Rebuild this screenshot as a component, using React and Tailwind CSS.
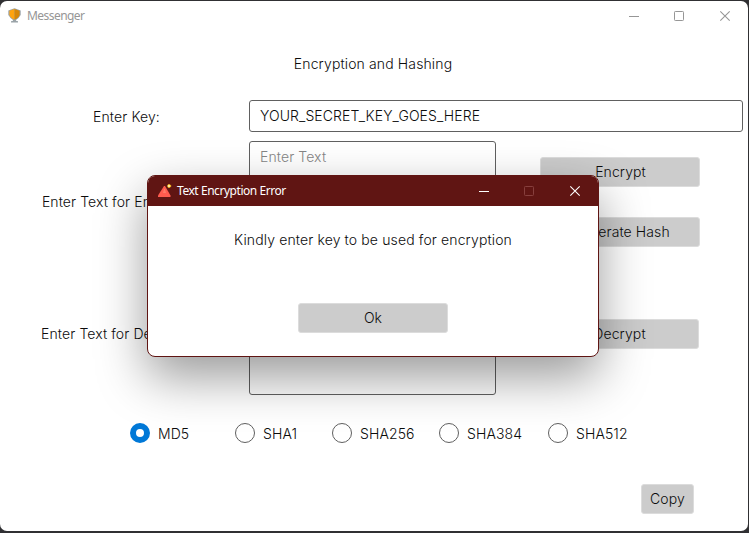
import React from "react";

const algorithms = [
  { name: "MD5", width: "w-[105px]", checked: true },
  { name: "SHA1", width: "w-[97px]" },
  { name: "SHA256", width: "w-[107px]" },
  { name: "SHA384", width: "w-[109px]" },
  { name: "SHA512", width: "w-[90px]" },
];

function Button({ children, className = "" }) {
  return (
    <button className={`flex h-[30px] shrink-0 items-center justify-center rounded-[3px] border border-[#dcdcdc] bg-[#cccccc] pb-[2px] tracking-[0.1px] ${className}`}>
      {children}
    </button>
  );
}

function WindowControls({ minColor, maxColor, closeColor }) {
  return (
    <svg className="h-[12px] w-[104px]" viewBox="0 0 104 12" fill="none">
      <path d="M0 6.5H10" stroke={minColor} />
      <rect x="45.5" y="1.5" width="9" height="9" rx="0.8" stroke={maxColor} />
      <path d="M91.3 1.3L100.7 10.7M100.7 1.3L91.3 10.7" stroke={closeColor} strokeWidth="1.1" />
    </svg>
  );
}

function TrophyIcon() {
  return (
    <svg className="h-[15px] w-[13px]" viewBox="0 0 13 15">
      <path d="M0.3 2.5L3 1.5L6.5 0.3L10 1.5L12.7 2.5V7L10.5 10L8 12V12.7L10 13.3V14.5H3V13.3L5 12.7V12L2.5 10L0.3 7Z" fill="#9aa3a8" />
      <path d="M6.5 1L1.4 2.8V6.5Q2 10 6.5 11.8Z" fill="#ffa30f" />
      <path d="M6.5 1L11.6 2.8V6.5Q11 10 6.5 11.8Z" fill="#d88708" />
    </svg>
  );
}

function AlertIcon() {
  return (
    <svg className="h-[14px] w-[14px]" viewBox="0 0 14 14">
      <path d="M6 2H7L12.5 11.5V13H0V11.5Z" fill="#ff5b4f" />
      <path d="M6 5H7L8 9H5Z" fill="#ff7b68" />
      <path d="M11 0L12 0.5L13.5 2L12 3.5L11 4L10 3.5L9 2L10 0.5Z" fill="#ffc528" />
      <rect x="10" y="1" width="2" height="2" fill="#fff09a" />
    </svg>
  );
}

function Dialog() {
  return (
    <div className="absolute left-[147px] top-[175px] flex h-[182px] w-[452px] flex-col overflow-hidden rounded-[8px] border border-[#601513] bg-white shadow-[0_20px_50px_rgba(0,0,0,0.4)]">
      <div className="flex h-[30px] shrink-0 items-center bg-[#601513] pl-[10px] pr-[15px] font-['Noto_Sans'] text-[12px] font-normal text-white">
        <AlertIcon />
        <span className="ml-[5px] whitespace-nowrap tracking-[-0.45px]">Text Encryption Error</span>
        <div className="ml-auto flex">
          <WindowControls minColor="#ffffff" maxColor="#873f3d" closeColor="#ffffff" />
        </div>
      </div>
      <p className="mt-[24px] text-center leading-[20px] tracking-[0.13px]">Kindly enter key to be used for encryption</p>
      <Button className="mx-auto mt-[53px] w-[150px]">Ok</Button>
    </div>
  );
}

export default function App() {
  return (
    <div className="relative h-[533px] w-[749px] overflow-hidden bg-[#303033] pt-px font-['Inter',sans-serif] text-[14px] font-light tracking-[0.1px] text-[#0c0c0c]">
      <div className="flex h-[530px] w-[748px] flex-col overflow-hidden rounded-[7px] bg-white">
        <header className="flex h-[29px] shrink-0 items-center pl-[8px] pr-[15px] font-['Noto_Sans'] text-[12px] font-normal text-[#969696]">
          <TrophyIcon />
          <span className="ml-[6px] tracking-[-0.55px]">Messenger</span>
          <div className="ml-auto flex">
            <WindowControls minColor="#969696" maxColor="#969696" closeColor="#969696" />
          </div>
        </header>
        <h1 className="mt-[24px] h-[20px] w-[746px] text-center leading-[20px] tracking-[0.13px]">Encryption and Hashing</h1>
        <div className="ml-[2px] mt-[26px] grid w-[741px] grid-cols-3 grid-rows-[32px_122px_123px] gap-y-[9px]">
          <label className="flex items-center justify-center pl-[2px]">Enter Key:</label>
          <div className="col-span-2 flex items-center rounded-[3px] border border-[#606060] px-[10px] pb-[2px]">YOUR_SECRET_KEY_GOES_HERE</div>

          <label className="flex items-center justify-center whitespace-nowrap pb-[2px]">Enter Text for Encryption:</label>
          <div className="rounded-[3px] border border-[#606060] px-[10px] pt-[5px] leading-[20px] text-[#858585]">Enter Text</div>
          <div className="flex flex-col items-center justify-center gap-[30px]">
            <Button className="w-[160px] pl-[2px]">Encrypt</Button>
            <Button className="w-[160px] pl-[2px]">Generate Hash</Button>
          </div>

          <label className="flex items-center justify-center whitespace-nowrap">Enter Text for Decryption:</label>
          <div className="rounded-[3px] border border-[#606060] px-[10px] pt-[5px] leading-[20px] text-[#858585]">Enter Text</div>
          <div className="flex items-center justify-center pt-px">
            <Button className="w-[159px]">Decrypt</Button>
          </div>
        </div>
        <div className="ml-[130px] mt-[28px] flex h-[20px]">
          {algorithms.map(({ name, width, checked }) => (
            <label key={name} className={`flex shrink-0 items-center gap-[8px] ${width}`}>
              <span className={`h-[20px] w-[20px] shrink-0 rounded-full bg-white ${checked ? "border-[6px] border-[#0078d7]" : "border border-[#606060]"}`} />
              {name}
            </label>
          ))}
        </div>
        <Button className="ml-[641px] mt-[41px] w-[53px]">Copy</Button>
      </div>
      <Dialog />
    </div>
  );
}
